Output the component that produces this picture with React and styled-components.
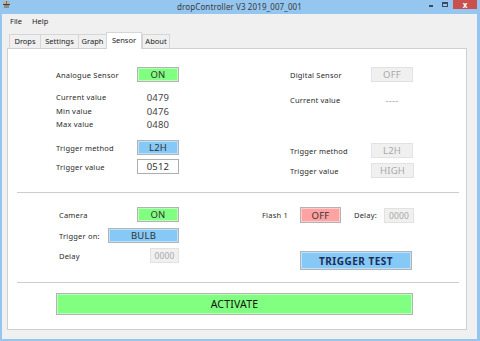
import React from "react";
import styled, { createGlobalStyle } from "styled-components";

const Global = createGlobalStyle`
  html, body {
    margin: 0;
    padding: 0;
    width: 480px;
    height: 341px;
    overflow: hidden;
  }
  body {
    font-family: "Noto Sans", "DejaVu Sans", sans-serif;
    color: #1e1e1e;
  }
`;

const Frame = styled.div`
  width: 480px;
  height: 341px;
  box-sizing: border-box;
  background: #95c6ef;
  padding: 0 3px 2px 2px;
  display: flex;
  flex-direction: column;
`;

const TitleBar = styled.div`
  height: 14px;
  flex: none;
  display: grid;
  grid-template-columns: 1fr auto 1fr;
  align-items: start;
`;

const IconSlot = styled.div`
  padding: 1px 0 0 1px;
  display: flex;
`;

const Title = styled.div`
  font-size: 8px;
  line-height: 13px;
  color: #3a3a3a;
  white-space: nowrap;
  letter-spacing: 0.1px;
`;

const Controls = styled.div`
  justify-self: end;
  display: flex;
  align-items: flex-start;
`;

const MinBtn = styled.div`
  width: 12px;
  height: 9px;
  display: flex;
  justify-content: center;
  padding-top: 5px;
  box-sizing: border-box;
  &::after {
    content: "";
    width: 4px;
    height: 2px;
    background: #3b4a5c;
  }
`;

const MaxBtn = styled.div`
  width: 16px;
  height: 9px;
  display: flex;
  justify-content: center;
  padding-top: 2px;
  box-sizing: border-box;
  &::after {
    content: "";
    width: 6px;
    height: 5px;
    box-sizing: border-box;
    border: 1px solid #3b4a5c;
    border-top-width: 2px;
  }
`;

const CloseBtn = styled.div`
  width: 24px;
  height: 9px;
  background: #c9504c;
  color: #fff;
  font-size: 8px;
  line-height: 9px;
  text-align: center;
  font-weight: 700;
`;

const Client = styled.div`
  flex: 1;
  background: #f0f0f0;
  padding: 0 10px 9px 5px;
  display: flex;
  flex-direction: column;
  min-height: 0;
`;

const MenuBar = styled.div`
  height: 16px;
  flex: none;
  display: flex;
  font-size: 7.5px;
  line-height: 15px;
`;

const MenuItem = styled.div`
  padding: 0 3px;
  margin-right: 4px;
`;

const TabStrip = styled.div`
  margin-top: 2px;
  height: 17px;
  flex: none;
  display: flex;
  align-items: flex-end;
  padding-left: 2px;
  margin-bottom: -1px;
  position: relative;
  z-index: 1;
`;

const Tab = styled.div`
  width: ${(p) => p.$w}px;
  box-sizing: border-box;
  height: ${(p) => (p.$active ? 17 : 14)}px;
  margin-bottom: ${(p) => (p.$active ? 0 : 1)}px;
  border: 1px solid #d6d6d6;
  border-bottom: none;
  border-right: ${(p) => (p.$active || p.$last ? "1px solid #d6d6d6" : "none")};
  background: ${(p) => (p.$active ? "#fff" : "#f0f0f0")};
  font-size: 7.5px;
  line-height: ${(p) => (p.$active ? 14 : 13)}px;
  text-align: center;
  color: #222;
`;

const Panel = styled.div`
  flex: 1;
  background: #fff;
  border: 1px solid #cfcfcf;
  padding-top: 18px;
  display: flex;
  flex-direction: column;
`;

const SensorGrid = styled.div`
  display: grid;
  grid-template-columns: 123px 124px;
  column-gap: 111px;
  padding-left: 48px;
  align-items: start;
`;

const Column = styled.div`
  display: flex;
  flex-direction: column;
`;

const Row = styled.div`
  display: flex;
  align-items: center;
  height: ${(p) => p.$h || 15}px;
  margin-top: ${(p) => p.$mt || 0}px;
  justify-content: ${(p) => (p.$spread ? "space-between" : "flex-start")};
  margin-left: ${(p) => p.$ml || 0}px;
`;

const Label = styled.div`
  width: ${(p) => (p.$w === undefined ? 81 : p.$w)}px;
  flex: none;
  font-size: 7.5px;
  letter-spacing: 0.2px;
  color: #2a2a2a;
  white-space: nowrap;
  margin-left: ${(p) => p.$ml || 0}px;
`;

const Value = styled.div`
  width: 42px;
  text-align: center;
  font-size: 9.5px;
  letter-spacing: 0.2px;
  color: ${(p) => (p.$muted ? "#a8a8a8" : "#444")};
`;

const palette = {
  green: "#80ff80",
  blue: "#86c9f7",
  red: "#ffa2a2",
};

const Button = styled.div`
  width: ${(p) => p.$w || 42}px;
  height: ${(p) => p.$h || 15}px;
  box-sizing: border-box;
  flex: none;
  display: flex;
  align-items: center;
  justify-content: center;
  background: ${(p) => palette[p.$tone] || "#f0f0f0"};
  border: 1px solid ${(p) => (p.$tone ? "#b3b3b3" : "#e2e2e2")};
  box-shadow: ${(p) => (p.$tone ? "inset 0 0 0 1px rgba(255,255,255,0.45)" : "none")};
  font-size: ${(p) => p.$fs || 9.5}px;
  font-weight: ${(p) => (p.$bold ? 700 : 400)};
  color: ${(p) => (p.$tone ? p.$ink || "#333" : "#a8a8a8")};
  letter-spacing: ${(p) => (p.$bold ? "0.5px" : "0.2px")};
  margin-left: ${(p) => p.$ml || 0}px;
`;

const Field = styled.div`
  width: ${(p) => p.$w || 42}px;
  height: ${(p) => p.$h || 15}px;
  box-sizing: border-box;
  flex: none;
  display: flex;
  align-items: center;
  justify-content: center;
  background: ${(p) => (p.$disabled ? "#f0f0f0" : "#fff")};
  border: 1px solid ${(p) => (p.$disabled ? "#e2e2e2" : "#adadad")};
  font-size: ${(p) => p.$fs || 9.5}px;
  letter-spacing: 0.2px;
  color: ${(p) => (p.$disabled ? "#a8a8a8" : "#333")};
`;

const Divider = styled.div`
  height: 1px;
  background: #cdcdcd;
  margin: ${(p) => p.$mt}px 7px 0 9px;
  flex: none;
`;

const ActionGrid = styled.div`
  display: grid;
  grid-template-columns: 120px auto;
  column-gap: 83px;
  padding-left: 51px;
  margin-top: 14px;
  align-items: start;
`;

const ActivateButton = styled(Button)`
  margin: 10px 0 0 48px;
  font-size: 10.5px;
  color: #111;
`;

const AppIcon = () => (
  <svg width="7" height="7" viewBox="0 0 7 7">
    <rect x="0" y="0" width="7" height="3" fill="#b9b2a6" />
    <rect x="0" y="3" width="7" height="1" fill="#3d3d3d" />
    <rect x="1" y="4" width="5" height="3" fill="#8c8c8c" />
    <rect x="3" y="0" width="1" height="3" fill="#6d6d6d" />
  </svg>
);

const tabs = [
  { name: "Drops", w: 31 },
  { name: "Settings", w: 38 },
  { name: "Graph", w: 28 },
  { name: "Sensor", w: 36, active: true },
  { name: "About", w: 28, last: true },
];

export default function App() {
  return (
    <>
      <Global />
      <Frame>
        <TitleBar>
          <IconSlot>
            <AppIcon />
          </IconSlot>
          <Title>dropController V3 2019_007_001</Title>
          <Controls>
            <MinBtn />
            <MaxBtn />
            <CloseBtn>x</CloseBtn>
          </Controls>
        </TitleBar>
        <Client>
          <MenuBar>
            <MenuItem>File</MenuItem>
            <MenuItem>Help</MenuItem>
          </MenuBar>
          <TabStrip>
            {tabs.map((t) => (
              <Tab key={t.name} $w={t.w} $active={t.active} $last={t.last}>
                {t.name}
              </Tab>
            ))}
          </TabStrip>
          <Panel>
            <SensorGrid>
              <Column>
                <Row>
                  <Label>Analogue Sensor</Label>
                  <Button $tone="green">ON</Button>
                </Row>
                <Row $h={12} $mt={9}>
                  <Label>Current value</Label>
                  <Value>0479</Value>
                </Row>
                <Row $h={12} $mt={2}>
                  <Label>Min value</Label>
                  <Value>0476</Value>
                </Row>
                <Row $h={12} $mt={1}>
                  <Label>Max value</Label>
                  <Value>0480</Value>
                </Row>
                <Row $mt={10}>
                  <Label>Trigger method</Label>
                  <Button $tone="blue">L2H</Button>
                </Row>
                <Row $mt={4}>
                  <Label>Trigger value</Label>
                  <Field>0512</Field>
                </Row>
              </Column>
              <Column>
                <Row>
                  <Label>Digital Sensor</Label>
                  <Button>OFF</Button>
                </Row>
                <Row $h={12} $mt={12}>
                  <Label>Current value</Label>
                  <Value $muted>----</Value>
                </Row>
                <Row $mt={37}>
                  <Label>Trigger method</Label>
                  <Button>L2H</Button>
                </Row>
                <Row $mt={5}>
                  <Label>Trigger value</Label>
                  <Button $w={43}>HIGH</Button>
                </Row>
              </Column>
            </SensorGrid>

            <Divider $mt={14} />

            <ActionGrid>
              <Column>
                <Row $spread>
                  <Label $w={0}>Camera</Label>
                  <Button $tone="green">ON</Button>
                </Row>
                <Row $spread $mt={6}>
                  <Label $w={0}>Trigger on:</Label>
                  <Button $tone="blue" $w={71}>
                    BULB
                  </Button>
                </Row>
                <Row $spread $mt={5}>
                  <Label $w={0}>Delay</Label>
                  <Field $disabled $w={29} $fs={8.5}>
                    0000
                  </Field>
                </Row>
              </Column>
              <Column>
                <Row $h={16}>
                  <Label $w={38}>Flash 1</Label>
                  <Button $tone="red" $w={41} $h={16}>
                    OFF
                  </Button>
                  <Label $w={30} $ml={13}>
                    Delay:
                  </Label>
                  <Field $disabled $w={30} $fs={8.5}>
                    0000
                  </Field>
                </Row>
                <Row $h={19} $mt={28} $ml={38}>
                  <Button $tone="blue" $w={112} $h={19} $bold $fs={10} $ink="#1b2d55">
                    TRIGGER TEST
                  </Button>
                </Row>
              </Column>
            </ActionGrid>

            <Divider $mt={12} />

            <ActivateButton $tone="green" $w={357} $h={22}>
              ACTIVATE
            </ActivateButton>
          </Panel>
        </Client>
      </Frame>
    </>
  );
}
